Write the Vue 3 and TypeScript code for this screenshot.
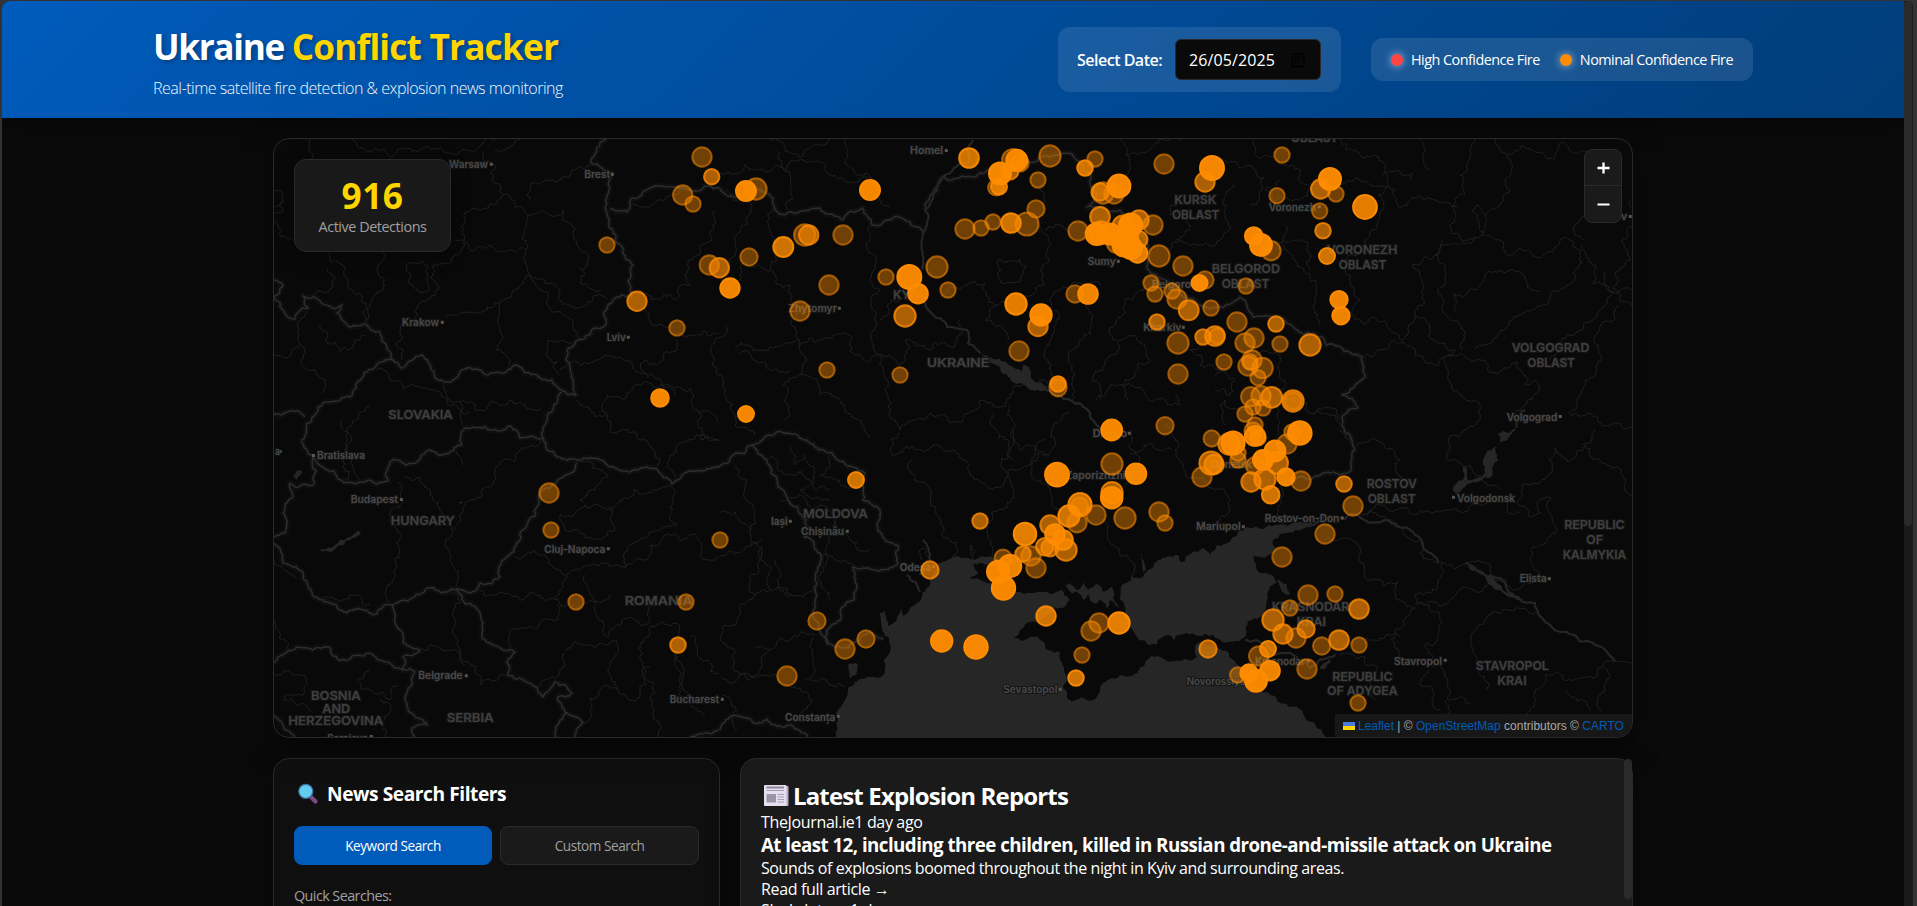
<script setup lang="ts">
type Fire = [x: number, y: number, r: number, count: number]
type Label = { t: string; x: number; y: number; w: number; region?: boolean; dot?: [number, number] }

const firesRaw: Fire[] = [
  [702,157,10.7,1],[711.7,176.7,8.7,2],[682.7,195,10.7,1],[693,204,8.7,1],[607,245,8.7,1],[637,301.3,10.7,2],[677,328,8.7,1],[660,398,9.8,6],[709.3,265,10.7,1],[719.3,267.7,10.7,2],
  [756,189,11.7,1],[746,191,11,6],[870,190,11,6],[804.7,235,11.7,1],[808.7,235,10.7,2],[783.3,247,11,3],[843,235,10.7,1],[749,257,9.7,1],[730,288,10.7,5],[829,285,10.7,1],[800,311,10.7,1],
  [886,277,8.7,1],[909.3,277,13,6],[918,293.7,10.8,5],[905,316,11.7,2],[937,267,11.7,1],[948,290,8.7,1],[827,370,8.7,1],[900,375,8.7,1],[746,414,9,6],[969,158,10.8,3],
  [1013,160,12,1],[1020,163,9.7,1],[1016.7,160.3,11.5,5],[1010,171,9.5,2],[1000,173.5,12,6],[996,187.5,9,1],[999,186.7,9,3],[1050,156,11.7,1],[1038,180,8.7,1],[1095,159,8.7,1],[1085,168,8.8,3],[1164,164,10.7,1],
  [1103,193,11.7,1],[1100,192,9.7,2],[1114,194,10.7,1],[1119,186,12.4,6],[1036,209,9.7,1],[1027,224,12.6,1],[1011,223,10.8,3],[993,222,8.7,1],[981,228,8.7,1],[965,229,10.7,1],[1078,231,10.7,1],
  [1100,216.7,10.8,2],[1100.7,232.7,12.5,2],[1096.7,234,12,6],[1110,234,11.5,5],[1123,226,11.5,2],[1130.7,225,12.5,6],[1139,220,10.7,2],[1153,225,10.7,1],[1116.7,243,11,1],[1120,240,9.5,5],[1128,237,11,5],[1139,239.5,9.5,2],[1124,245,12.5,5],[1137.5,253,10.7,4],[1131,248,12,5],[1159,256,11.7,1],
  [1151,283,8.7,1],[1155,294,8.7,1],[1075,294,9.7,1],[1088,294,10.8,5],[1016,304,11.7,4],[1038,326.5,10.7,2],[1041,315,11.7,6],[1019,351,10.7,1],[1058,387.7,9.7,1],[1058,384,8.8,3],[1157,322,8.7,2],[1111.7,430,11.4,6],
  [1205,182,10.7,2],[1212,168,13,6],[1282,155,8.7,1],[1277,195.7,8.7,1],[1320.7,189,10.7,2],[1336,194,8.7,1],[1330,179,12,6],[1365,207,12.9,4],[1319.7,211,8.7,1],[1323,230.7,8.8,2],[1327,256,9,3],
  [1271,250.7,10.7,1],[1253.7,236,9.8,6],[1261,245,12,6],[1339,299.7,9.7,5],[1341,315.7,9.7,5],[1183,266,10.7,1],[1205,280,9.7,1],[1199.5,283,9,6],[1246,286,8.7,1],[1172,291,8.7,1],[1177,299,10.7,1],[1188.7,310.3,11,2],[1211,308,8.7,1],
  [1237,322,10.7,1],[1276,324,8.8,2],[1178,343,11.7,1],[1203,337,8.7,2],[1215,336,10.8,2],[1217,336,8.7,1],[1245,343,10.7,1],[1254,338,10.7,1],[1280,344,8.7,1],[1310,345,11.7,2],[1224,362,8.7,1],[1178,374,10.7,1],
  [1248,366,10.7,1],[1252,360,10.7,1],[1250,362,8.7,1],[1262.5,368,11.3,1],[1258,377.7,8.7,1],[1250.7,396.7,10.7,1],[1261,395.7,10.7,1],[1271.7,397.3,11.4,2],[1293,401,11.7,2],[1293,401,9.5,1],[1253,407,8.7,1],[1263,408,8.7,1],[1245,414,8.7,1],
  [1255,425,8.7,1],[1253,431,9.7,1],[1255,436,11,3],[1165,425.7,9.7,1],[1211.7,438.5,9.2,1],[1229,444,11.7,2],[1233,443,12.6,5],[1292,432,8.7,1],[1253,437,9,1],[1258,437.5,8.8,2],[1238,453,8.7,1],[1238,460,8.7,1],[1287,444,10.7,1],[1299.8,433,12.8,6],
  [1202,477,10.7,1],[1211,463,12.6,2],[1214,464.5,10.7,2],[1255,466,10,1],[1277,463,12,2],[1263,460,11,6],[1275,451,11.4,5],[1251,482,10.7,2],[1265,479,11.7,2],[1286,477,9.7,5],[1301,481,10.7,1],[1270.7,494.7,9.8,3],
  [1057,474.7,12.9,6],[1112,464,11.7,1],[1136,473.7,11.3,6],[1112,492.7,11.7,2],[1111.7,497.7,11.8,5],[1080,504.7,12.6,3],[1079.5,506,9.5,1],[1069,516,11.7,3],[1077,522.7,10.7,1],[1096,515,10.7,1],[1125,518,11.7,1],[1159,512,10.7,1],[1165,523,8.7,1],
  [1050,525,10.7,2],[1025,534,12.3,4],[1055,534,10.8,4],[1063,540,10.8,3],[1066,550,11.7,2],[1044.7,546.7,9.7,2],[1050,547.7,9.7,2],[1031,556,10.7,1],[1023,554,8.7,2],[1036,568,10.7,1],[1003,558,9.5,1],[1010,566,12.3,5],[998,571.7,12,6],[1003.5,588,12.7,6],
  [1046,616,10.7,3],[1099,623,10.7,1],[1091,631,10.7,1],[1119,623,11.7,4],[1082,655,8.7,1],[1076,678,8.8,3],[1208,649,9.7,2],[1282,557,10.7,1],[1325,534,10.7,1],[1308,595,10.7,1],[1290,608,8.7,1],[1273,620,11.7,2],[1283,634,10.7,2],[1296,638,10.7,1],[1306,629,9.7,2],[1321.7,646,9.7,1],
  [1258.7,656,10.7,1],[1268,649,9,3],[1237.7,675,8.7,1],[1249,673,9.7,6],[1256,680.7,12,6],[1270,670.7,10.8,5],[1307,669,10.7,1],[1344,484,8.8,2],[1353,506,10.7,1],[1335,594,8.7,1],[1359,609,10.8,2],[1339,640,10.8,2],[1359,645,8.7,1],[1358,703,8.7,1],
  [856,480,9,3],[980,521,8.7,2],[930,570,9.7,2],[817,621,9.7,1],[845,649,10.7,1],[866,639,9.7,1],[787,676,10.7,1],[720,540,8.7,1],[941.7,641,11.7,6],[976,647,12.8,6],[549,493,10.7,1],[551,530,8.7,1],[576,602,8.7,1],[686,602,8.7,1],[678,645,8.8,2],
]

const fires = firesRaw.map(([x, y, r, n]) => ({
  x, y, r: r - 1,
  fill: +(1 - Math.pow(0.58, n)).toFixed(3),
  stroke: +(1 - Math.pow(0.45, n)).toFixed(3),
}))

const labels: Label[] = [
  { t: 'Warsaw', x: 449, y: 167.7, w: 39, dot: [491.3, 164.3] },
  { t: 'Brest', x: 584.3, y: 178.3, w: 25.7, dot: [612.3, 174.3] },
  { t: 'Krakow', x: 402, y: 325.7, w: 37, dot: [442.3, 322.3] },
  { t: 'Lviv', x: 606.7, y: 341.3, w: 19, dot: [628.3, 337.3] },
  { t: 'SLOVAKIA', x: 388.3, y: 419, w: 64.4, region: true },
  { t: 'Homel', x: 910, y: 154, w: 33, dot: [946.3, 150.5] },
  { t: 'KYIV', x: 893, y: 299, w: 29, region: true },
  { t: 'Zhytomyr', x: 788.3, y: 312, w: 48.5, dot: [839.3, 308.3] },
  { t: 'UKRAINE', x: 926.7, y: 367.3, w: 62.6, region: true },
  { t: 'Sumy', x: 1087.7, y: 265.3, w: 28, dot: [1118.3, 261.3] },
  { t: 'Belgorod', x: 1151.7, y: 288, w: 46 },
  { t: 'Kharkiv', x: 1143.3, y: 330.7, w: 38, dot: [1183.3, 327.3] },
  { t: 'Voronezh', x: 1268.7, y: 210.7, w: 47.3, dot: [1319.3, 206.7] },
  { t: 'OBLAST', x: 1291, y: 142, w: 47, region: true },
  { t: 'KURSK', x: 1174.3, y: 204, w: 42, region: true },
  { t: 'OBLAST', x: 1172, y: 218.7, w: 47.3, region: true },
  { t: 'BELGOROD', x: 1211.7, y: 273.3, w: 68.3, region: true },
  { t: 'OBLAST', x: 1221.7, y: 288, w: 47.6, region: true },
  { t: 'Dnipro', x: 1092.7, y: 437, w: 34.5, dot: [1129.3, 433.3] },
  { t: 'VORONEZH', x: 1326.7, y: 254, w: 70.6, region: true },
  { t: 'OBLAST', x: 1338.7, y: 268.7, w: 47.6, region: true },
  { t: 'VOLGOGRAD', x: 1511.7, y: 352, w: 77.6, region: true },
  { t: 'OBLAST', x: 1527.3, y: 366.7, w: 47.6, region: true },
  { t: 'Volgograd', x: 1506.7, y: 420.7, w: 50.6, dot: [1560.3, 416.5] },
  { t: 'v', x: 1621, y: 220, w: 6, dot: [1630.3, 216.5] },
  { t: 'a', x: 275, y: 455, w: 5, dot: [280.3, 451.5] },
  { t: 'Bratislava', x: 317, y: 458.7, w: 48, dot: [313.5, 455.5] },
  { t: 'Budapest', x: 350.7, y: 503.3, w: 47.3, dot: [401.3, 499.5] },
  { t: 'HUNGARY', x: 390.7, y: 525.3, w: 64, region: true },
  { t: 'Cluj-Napoca', x: 544.3, y: 552.7, w: 61, dot: [608.3, 548.7] },
  { t: 'ROMANIA', x: 624.7, y: 604.7, w: 68, region: true },
  { t: 'Belgrade', x: 418.3, y: 679.3, w: 44.4, dot: [466.3, 675.7] },
  { t: 'Bucharest', x: 669.7, y: 703.3, w: 49.3, dot: [722.3, 699.3] },
  { t: 'BOSNIA', x: 311, y: 700, w: 49.6, region: true },
  { t: 'AND', x: 322.3, y: 712.5, w: 27.7, region: true },
  { t: 'HERZEGOVINA', x: 288.3, y: 725.3, w: 95, region: true },
  { t: 'SERBIA', x: 446.7, y: 722.3, w: 47, region: true },
  { t: 'Sarajevo', x: 327.3, y: 742, w: 41, dot: [371.3, 736.5] },
  { t: 'MOLDOVA', x: 803, y: 517.7, w: 64.7, region: true },
  { t: 'Iași', x: 771, y: 525.3, w: 16.7, dot: [790.3, 521.3] },
  { t: 'Chișinău', x: 801, y: 534.7, w: 43, dot: [847.3, 531.3] },
  { t: 'Odesa', x: 899.7, y: 570.7, w: 31.5, dot: [933.7, 566.7] },
  { t: 'Constanța', x: 785, y: 720.7, w: 50.3, dot: [838.3, 716.3] },
  { t: 'Sevastopol', x: 1003.3, y: 692.7, w: 54, dot: [1060.3, 689.3] },
  { t: 'Zaporizhzhia', x: 1065.5, y: 479, w: 66 },
  { t: 'Mariupol', x: 1196, y: 530, w: 44.7, dot: [1243.3, 526.7] },
  { t: 'Donetsk', x: 1211, y: 467.5, w: 41 },
  { t: 'Rostov-on-Don', x: 1264.7, y: 521.5, w: 74.6, dot: [1342.3, 518] },
  { t: 'Krasnodar', x: 1255, y: 665, w: 50, dot: [1308.3, 661] },
  { t: 'KRASNODAR', x: 1271.7, y: 611, w: 77.6, region: true },
  { t: 'KRAI', x: 1296.7, y: 625.7, w: 29.3, region: true },
  { t: 'Novorossiysk', x: 1186.7, y: 685.3, w: 64 },
  { t: 'ROSTOV', x: 1366.7, y: 488.3, w: 50, region: true },
  { t: 'OBLAST', x: 1367.7, y: 503, w: 48, region: true },
  { t: 'Volgodonsk', x: 1457, y: 501.7, w: 58, dot: [1453.5, 497.3] },
  { t: 'REPUBLIC', x: 1564.3, y: 529, w: 60.4, region: true },
  { t: 'OF', x: 1586, y: 543.7, w: 17, region: true },
  { t: 'KALMYKIA', x: 1562.7, y: 558.5, w: 63.6, region: true },
  { t: 'Elista', x: 1519.7, y: 582, w: 27, dot: [1549.3, 578.7] },
  { t: 'STAVROPOL', x: 1475.7, y: 670, w: 73, region: true },
  { t: 'KRAI', x: 1497.3, y: 684.7, w: 29.3, region: true },
  { t: 'Stavropol', x: 1394, y: 664.7, w: 48, dot: [1445.3, 660.3] },
  { t: 'REPUBLIC', x: 1332.3, y: 680.7, w: 60.2, region: true },
  { t: 'OF ADYGEA', x: 1327, y: 695.3, w: 70.7, region: true },
]

/* Turns a coarse polyline into a wandering one by repeated midpoint displacement. */
function rough(src: string, amp: number): string {
  let pts = src.split(' ').map((p) => p.split(',').map(Number) as [number, number])
  let seed = Math.round(pts[0][0] * 31 + pts[0][1] * 17 + pts.length * 101)
  const rnd = () => {
    seed = (seed * 1103515245 + 12345) % 2147483648
    return seed / 2147483648 - 0.5
  }
  for (let level = 0; level < 5; level++) {
    const out: [number, number][] = [pts[0]]
    for (let i = 1; i < pts.length; i++) {
      const [ax, ay] = pts[i - 1]
      const [bx, by] = pts[i]
      const dx = bx - ax
      const dy = by - ay
      if (Math.hypot(dx, dy) > 3.2) {
        const k = rnd() * amp
        out.push([(ax + bx) / 2 - dy * k, (ay + by) / 2 + dx * k])
      }
      out.push([bx, by])
    }
    pts = out
  }
  return 'M' + pts.map((p) => p[0].toFixed(1) + ' ' + p[1].toFixed(1)).join('L')
}

const borders = [
  '607,139 591,163 612,173 607,203 613,233 633,265 631,297 613,300 578,340 566,360 576,395 562,390 538,377 513,366 488,375 467,368 447,382 435,378 422,355 403,368 393,360 380,332 350,327 337,313 342,305 303,296 308,308 295,319 274,297',
  '393,360 378,363 362,378 350,397 318,407 307,423 302,440 313,457 313,485 295,487 290,483 293,497 283,513 285,533 274,537',
  '274,415 287,412 305,417', '274,280 283,285 280,292 274,297',
  '313,457 320,465 343,482 388,481 390,462 420,459 430,450 443,455 462,445 467,428 490,430 510,426 520,438 543,438 543,428 553,410 562,392',
  '543,438 557,457 577,460 590,458 610,467 637,470 657,469 672,484 687,472 719,467 733,455 752,445 767,460 778,487 802,515 820,553 817,583 815,620 827,640 843,648 863,635 883,640',
  '752,445 766,436 787,433 807,440 833,455 853,467 865,473 863,500 880,510 883,537 898,545 898,563 863,568 853,567 857,587 843,607 830,627 828,645',
  '577,463 557,482 540,493 537,507 520,540 503,560 500,577 480,583 477,590 427,588 413,598 392,605 377,614 347,613 323,600 303,578 283,563 274,543',
  '457,590 480,613 482,633 515,652 508,675 537,687 543,697 555,682 572,693 558,697 567,713 555,737', '567,713 583,722 575,737',
  '392,605 397,627 403,643 420,651 403,657 403,670 387,662 360,655 347,660 307,648 287,652 274,663', '403,670 415,672 405,697 427,725 412,728 415,737', '274,715 295,737',
  '610,208 627,212 643,192 680,188 719,188 747,193 773,198 775,210 797,213 820,208 843,220 863,208 872,225 893,218 910,222 923,233',
  '925,210 933,193 943,177 980,173 1000,170 1020,162 1050,157 1073,155 1090,173 1097,193 1087,207 1120,210 1147,243 1147,267 1150,273 1173,283 1203,307 1240,297 1253,317 1297,330 1327,345 1340,347 1362,357 1365,377 1342,395 1358,407 1342,425 1352,440 1355,450 1347,473 1320,475 1285,482',
  '720,730 767,719 790,725 808,737', '719,730 700,734 690,737',
].map((s) => rough(s, 0.42))

const regions = [
  '310,139 306,175', '274,190 283,195 280,205 274,207', '283,200 280,237 293,240', '352,139 370,152 390,157 420,150 445,153 470,150 480,146 495,139', '482,152 495,165 503,195 480,210 465,212 464,240 455,255 433,265 438,290 420,303 415,320',
  '520,139 503,150 495,151', '530,200 531,183 545,180 570,176 590,166', '503,195 515,208 528,215 527,245 530,275 519,288 500,303 468,313 445,317', '455,240 470,250 490,245 505,252 527,250', '528,215 563,210 575,228 590,257 580,283 601,290',
  '530,275 545,283 560,293 563,305 587,302 607,299', '530,275 548,293 565,315 578,340', '548,340 547,353 558,375', '499,303 500,330 510,366', '578,340 560,341 548,340', '384,250 378,272 383,290 370,305 365,325', '406,268 415,263 428,266 430,288 420,292 406,268',
  '328,252 342,265 352,290 365,323', '312,297 330,290 328,268', '415,320 400,332 402,360', '320,325 325,340 340,352 353,345 365,336', '308,308 297,325 300,345 302,365 315,370 322,393', '274,355 290,356 300,348',
  '376,370 390,380 420,388 445,398 460,402 490,402 510,400 540,408', '445,382 447,400 470,413', '620,295 640,290 652,300 675,300 690,285 688,263 700,250 712,240 715,210', '645,310 650,323 670,333 690,335 719,333', '560,370 590,363 605,355 630,360 643,373 660,380 676,395',
  '676,340 675,352 660,362 645,360 648,378', '576,400 590,410 605,415', '608,415 607,395 640,385 665,385 700,412 719,423', '607,415 610,430 640,440 655,455 657,469', '700,412 701,440 719,440', '672,484 670,455 690,440 719,440', '615,215 635,205 665,200 680,193',
  '460,402 460,415 467,428', '342,420 352,440 343,482', '370,405 352,425 360,482', '463,440 455,450 463,465', '398,482 390,510 397,530 395,560 393,580 390,603', '405,476 430,490 440,508 452,530 450,550 455,587', '543,438 520,450 500,462 492,485 475,500 462,513 455,530', '323,600 345,600 370,605',
  '577,463 590,462 600,470 608,477 595,490 580,500 583,503', '560,515 585,505 610,507 615,530 600,540 585,538 565,530 560,515', '515,557 540,556 560,570 567,575', '480,590 500,592 520,600 540,595 558,600', '567,575 560,590 555,598 560,605 595,602 610,595',
  '567,573 580,570 600,565 625,568', '585,575 590,595 600,620 608,637', '608,637 610,630 640,625 650,618 656,600', '610,510 620,500 650,493 675,490 677,525 660,530 640,540 625,568', '625,568 645,560 650,545 670,535 690,535 700,555 719,557', '558,605 558,620 537,628 515,628 512,648',
  '565,650 590,645 617,641 618,690', '565,653 560,670 545,680 540,687', '618,690 600,690 590,710 578,725', '618,690 640,697 642,672 650,667', '650,628 646,670 650,700 660,725 658,737', '650,626 680,626 678,650 683,690 690,700', '690,635 697,655 710,672 719,673',
  '450,590 455,620 460,650 465,665', '415,650 440,648 460,655 480,685 508,676', '274,560 295,578', '274,620 285,640 287,652', '274,673 300,675 303,695 285,696 283,700 310,712', '370,670 357,680 362,690 390,700 398,685', '380,700 390,712 385,737',
  '677,650 680,700 705,715', '719,512 735,512 750,530 762,548 760,560 755,595', '720,556 740,553 762,540', '762,548 770,590 790,595 815,591', '735,465 747,500 750,530', '722,628 740,605 755,595 770,590', '775,560 780,590 790,597', '722,628 735,650 735,672 750,680', '755,648 770,650 780,638 800,633 815,636', '770,650 760,670 750,678',
  '722,678 755,678 780,683 800,688 812,700 800,715', '810,680 830,685 845,686', '813,637 805,680', '722,695 737,710 737,730', '770,455 778,470 790,475 810,480 830,490', '790,445 795,465 805,455 815,468 800,490 830,500', '830,455 820,475 840,480 860,485', '780,500 800,495 820,505 835,525 850,540 870,550', '820,555 845,560 855,567', '835,520 825,550 830,600',
  '766,139 785,152 810,148 830,139', '845,139 847,165 860,175 875,190 890,207', '780,152 790,172 787,210', '720,173 770,172 830,175 865,173 880,185', '720,190 745,200 747,225 735,245 725,270 720,290', '777,205 775,250 770,270 790,285 797,310', '770,272 745,262 740,280 720,295',
  '872,225 868,250 875,265 880,290 875,330 880,355 885,390 895,420', '797,310 800,350 803,375 783,385 785,420', '800,345 820,340 850,335 855,355 875,355', '735,347 760,350 790,343 800,340', '740,353 770,370 790,370', '725,325 727,400 735,425 755,435', '875,355 900,365 905,340 930,350 955,345 960,320', '903,283 900,300 880,320',
  '940,296 960,290 985,283 995,305 985,320 1000,325 1008,340', '1045,180 1040,215 1047,250 1045,285 1020,295 995,305', '998,260 1020,259 1023,275 1010,283 1000,280 998,260', '1045,230 1060,225 1070,235', '1100,285 1080,283 1060,290 1050,300 1055,325 1045,350 1050,370 1058,385', '1085,300 1080,340 1075,375 1072,400',
  '1148,285 1125,300 1117,320 1118,350 1105,365 1100,400', '1118,340 1145,345 1150,360 1135,375 1125,390 1128,400', '1095,400 1110,385 1140,387 1165,400 1180,405 1175,395', '803,375 820,395 845,405 860,420 870,437', '895,420 900,430 930,413 970,413 980,400 1010,398 1050,388', '900,433 890,450 895,455 920,450 950,452', '993,413 1008,440 1013,460', '1010,405 1015,440 1010,480 1003,510 990,545 990,558',
  '912,460 915,480 930,490 940,520 950,540 953,558', '950,452 965,460 975,480 1005,480 1030,465 1050,455', '1013,430 1020,450 1045,455 1055,440 1070,413', '1045,440 1040,480 1050,490 1060,510', '1130,430 1137,455 1125,485', '1105,520 1112,545 1130,560 1130,580', '1165,425 1175,450 1185,475 1215,490 1230,500 1215,525', '1130,455 1160,450 1172,450', '1285,480 1280,500 1277,515 1285,530',
  '970,556 970,545 973,560', '921,560 925,548 932,562', '1200,345 1190,350 1200,365 1225,370', '1215,375 1235,380 1230,395 1215,390', '1240,350 1275,352 1280,390 1310,413 1340,420', '1225,425 1225,400 1250,405', '1275,400 1278,430 1280,450', '1312,413 1335,415 1342,425',
  '1120,139 1130,160 1125,180', '1125,155 1150,150 1180,140 1200,139', '1200,165 1225,160 1255,170 1262,190 1250,205', '1280,180 1265,190 1290,200 1320,183', '1255,139 1260,158 1283,165 1300,170 1307,185', '1235,185 1225,210 1220,240 1200,245 1180,240 1170,250', '1285,225 1295,260 1310,280 1315,300 1320,325', '1265,260 1300,240 1310,270', '1180,200 1170,215 1190,230 1175,240',
  '1340,139 1360,155 1385,165 1388,178 1378,195 1377,225 1365,240 1345,270 1350,285 1360,300 1355,320 1375,318 1390,330 1403,340', '1325,187 1345,183 1380,186 1395,190 1397,203 1415,198 1435,200 1458,207', '1383,175 1395,171 1412,173 1410,180', '1420,139 1423,155 1430,170', '1475,139 1472,155 1460,175 1465,195 1455,212 1450,225 1460,238 1475,237 1485,215 1478,205',
  '1495,139 1500,150 1508,155 1505,180 1510,190 1500,205 1485,215', '1508,153 1535,152 1555,157 1560,143 1580,152 1600,160', '1478,205 1472,210 1485,235 1495,240 1508,255 1520,248 1555,247 1570,240 1580,250 1575,275 1560,290 1545,305 1520,315 1500,330 1485,345 1475,350',
  '1475,237 1472,243 1445,245 1437,255 1435,255 1442,240', '1437,255 1412,265 1423,290 1415,313 1430,330 1455,350 1452,385 1475,400 1480,415 1465,430 1450,436', '1437,255 1445,280 1443,305 1460,325 1462,350', '1454,312 1453,293 1475,290 1485,275 1510,270 1527,282 1540,291', '1352,440 1340,430 1370,440 1385,448 1400,460 1402,480', '1362,357 1380,350 1400,343 1415,355 1460,354 1480,360 1497,375 1518,362 1525,385 1535,380 1532,400 1515,410',
  '1403,340 1415,315', '1582,245 1595,265 1593,284 1605,285 1633,290', '1604,272 1600,310 1580,330 1560,345 1550,360', '1630,200 1622,240 1630,260 1615,275 1620,300 1633,305', '1618,305 1600,330 1598,345 1585,380 1580,395 1568,413', '1570,415 1590,413 1610,425 1633,425', '1585,215 1575,225 1575,235 1583,240',
  '1450,436 1448,460 1470,465 1480,475 1500,490', '1366,515 1380,505 1395,510 1430,512 1480,505 1520,513', '1353,515 1385,517 1400,527 1420,540 1430,560 1445,563 1465,564', '1320,545 1360,548 1360,562 1370,580 1398,582 1400,600 1415,608 1405,625 1395,630 1395,648 1405,665', '1442,563 1438,580 1415,595 1425,605 1450,600 1460,590 1480,592 1488,585',
  '1470,562 1490,570 1510,587 1520,588 1540,573 1530,560 1545,543 1552,520 1550,497 1540,500 1540,513 1528,515 1522,485 1550,473 1555,448 1568,462 1585,445 1600,460 1617,467 1625,485 1633,497', '1595,430 1582,445', '1415,604 1440,615 1440,628 1425,645 1430,665 1445,675 1448,700 1470,705', '1487,690 1478,665 1482,625 1492,612 1515,609 1540,618',
  '1632,665 1600,668 1580,678 1560,674 1545,675 1535,690 1530,710 1510,720', '1605,668 1610,678 1600,695 1602,710', '1365,640 1390,635 1400,637', '1340,655 1365,657 1378,668 1375,700', '1445,700 1450,713 1435,715', '1565,690 1590,710', '1430,672 1420,685 1440,710',
].map((s) => rough(s, 0.6))

const rivers = [
  '973,140 968,163 943,177 933,197 925,210 926,227 922,250 923,270', '923,295 928,310 947,327 967,330 968,343 980,353', '1045,388 1070,400 1090,413 1105,430', '923,540 930,560 920,575', '1465,563 1475,568 1500,578 1515,597 1535,603 1545,622 1567,632 1595,645 1615,662', '1395,524 1415,535 1425,550 1438,562', '1300,525 1335,518 1355,514 1395,524',
  '1515,430 1505,441', '1516,428 1525,410', '1245,640 1275,655 1310,668 1335,655', '907,575 920,592',
].map((s) => rough(s, 0.35))

const water = [
  '836,738 838,720 838,710 848,688 855,682 867,677 883,675 884,660 889,638 883,632 885,615 888,626 897,620 900,607 903,616 910,608 922,593 930,582 937,565 950,559 967,558 975,560 990,556 1002,560 1000,566 980,563 973,564 978,572 970,578 985,582 995,588 1003,593 1020,592 1040,592 1050,594 1062,590 1070,600 1060,608 1053,608 1045,616 1037,622 1020,630 1014,638 1022,641 1038,637 1048,650 1054,653 1060,652 1064,667 1063,687 1067,695 1072,702 1078,699 1090,701 1100,690 1103,683 1112,678 1122,675 1132,676 1140,667 1147,660 1157,656 1167,661 1180,661 1197,657 1195,646 1200,642 1218,648 1233,660 1249,672 1257,687 1267,692 1278,702 1290,707 1303,712 1313,722 1328,738',
  '1121,587 1132,580 1131,576 1143,577 1153,568 1167,557 1178,555 1183,562 1192,552 1203,548 1210,555 1217,545 1233,537 1247,527 1262,529 1277,525 1300,522 1322,521 1308,527 1300,530 1285,533 1273,540 1276,550 1267,556 1253,555 1256,566 1260,573 1272,575 1277,582 1267,600 1260,617 1247,621 1246,635 1240,641 1233,642 1220,640 1213,635 1198,636 1187,633 1178,635 1174,640 1168,635 1163,637 1157,644 1150,645 1133,630 1125,617 1120,600',
  '980,353 992,358 1007,363 1022,372 1023,365 1030,370 1033,380 1048,387 1040,391 1030,390 1018,384 1010,378 1000,367 987,360',
  '1065,585 1070,583 1078,590 1085,582 1088,590 1096,584 1103,592 1112,587 1114,600 1119,608 1110,600 1107,608 1099,596 1096,604 1088,594 1084,600 1077,592 1072,594',
  '1516,427 1508,433 1498,433 1500,442 1488,450 1485,473 1477,478 1467,480 1464,466 1462,480 1453,491 1456,495 1477,482 1491,477 1498,461 1495,449 1507,440',
  '320,549 333,547 350,537 358,530 361,534 350,540 335,549 322,552',
  '1467,565 1472,571 1485,575 1488,584 1500,590 1510,597 1525,599 1510,593 1493,578 1477,570',
  '1141,553 1146,568 1143,572', '848,665 858,664 856,675 850,679', '1277,579 1290,594 1282,592',
  '293,476 300,470 302,473 297,480', '880,613 885,611 885,630 882,630',
  '1320,667 1333,656 1337,652 1330,663 1320,669', '457,502 462,501 462,504',
].map((s) => rough(s, 0.4) + 'Z')
</script>

<template>
  <div class="window">
    <div class="page">
      <header class="header">
        <div class="header-inner">
          <div class="brand">
            <h1>Ukraine <span>Conflict Tracker</span></h1>
            <p>Real-time satellite fire detection &amp; explosion news monitoring</p>
          </div>
          <div class="controls">
            <div class="date-box">
              <span class="date-label">Select Date:</span>
              <div class="date-input">
                <span>26/05/2025</span>
                <svg width="16" height="16" viewBox="0 0 16 16"><path d="M2 3.5a1.5 1.5 0 0 1 1.5-1.5h9A1.5 1.5 0 0 1 14 3.500V13.500a1 1 0 0 1-1 1H3a1 1 0 0 1-1-1zM2 5.500H14M4.500 8h1.500M7.300 8h1.500M10 8h1.500M4.500 11h1.500M7.300 11h1.500" fill="none" stroke="#000" stroke-width="1.300" /></svg>
              </div>
            </div>
            <div class="legend">
              <span class="legend-item"><i class="dot high"></i>High Confidence Fire</span>
              <span class="legend-item"><i class="dot nominal"></i>Nominal Confidence Fire</span>
            </div>
          </div>
        </div>
      </header>

      <main class="main">
        <section class="map">
          <svg class="map-canvas" viewBox="274 139 1358 598" width="1358" height="598">
            <path v-for="(d, i) in regions" :key="'r' + i" :d="d" class="region-line" />
            <path v-for="(d, i) in borders" :key="'g' + i" :d="d" class="border-glow" />
            <path v-for="(d, i) in borders" :key="'b' + i" :d="d" class="border-line" />
            <path v-for="(d, i) in water" :key="'w' + i" :d="d" class="water" />
            <path v-for="(d, i) in rivers" :key="'v' + i" :d="d" class="river" />
            <g v-for="(l, i) in labels" :key="'l' + i">
              <rect v-if="l.dot" :x="l.dot[0] - 1.5" :y="l.dot[1] - 1.5" width="3" height="3" class="town" />
              <text :x="l.x" :y="l.y" :textLength="l.w" lengthAdjust="spacingAndGlyphs" :class="l.region ? 'region' : 'city'">{{ l.t }}</text>
            </g>
            <circle v-for="(f, i) in fires" :key="'f' + i" class="fire" :cx="f.x" :cy="f.y" :r="f.r" :fill-opacity="f.fill" :stroke-opacity="f.stroke" />
          </svg>
          <div class="stat">
            <strong>916</strong>
            <span>Active Detections</span>
          </div>
          <div class="zoom">
            <button><svg width="13" height="12" viewBox="0 0 13 12"><path d="M6.500 .5v11M.5 6h12" stroke="#fff" stroke-width="2.300" /></svg></button>
            <button><svg width="13" height="12" viewBox="0 0 13 12"><path d="M.5 6.500h12" stroke="#fff" stroke-width="2.200" /></svg></button>
          </div>
          <div class="attribution">
            <svg width="12" height="8" viewBox="0 0 12 8"><path fill="#4C7BE1" d="M0 0h12v4H0z" /><path fill="#FFD500" d="M0 4h12v4H0z" /></svg>
            <a>Leaflet</a> | © <a>OpenStreetMap</a> contributors © <a>CARTO</a>
          </div>
        </section>

        <div class="panels">
          <section class="panel filters">
            <h2>
              <svg width="22" height="22" viewBox="0 0 22 22">
                <path d="M13.500 13.500l5 5" stroke="#7b4a85" stroke-width="4.200" stroke-linecap="round" />
                <circle cx="8.800" cy="8.300" r="7" fill="#62cdf0" stroke="#3c6f9e" stroke-width="1.300" />
              </svg>
              <span>News Search Filters</span>
            </h2>
            <div class="tabs">
              <button class="tab active">Keyword Search</button>
              <button class="tab">Custom Search</button>
            </div>
            <p class="quick">Quick Searches:</p>
          </section>
          <section class="panel news">
            <h2>
              <svg width="26" height="24" viewBox="0 0 26 24">
                <rect x="21" y="2" width="4.500" height="20" rx="1" fill="#b9acc6" />
                <rect x="1" y="1" width="22.500" height="21" rx="1" fill="#e6dff0" />
                <path d="M3.500 3.500h17.500" stroke="#8f8799" stroke-width="2" />
                <path d="M3.500 6.500h17.500M14.500 10.500h6.500M14.500 13h6.500M14.500 15.500h6.500M14.500 18h6.500" stroke="#a79fb2" stroke-width="1" />
                <rect x="3.500" y="10" width="9.500" height="8.500" rx="1" fill="#9b93a6" />
              </svg>
              <span>Latest Explosion Reports</span>
            </h2>
            <div class="line meta">TheJournal.ie1 day ago</div>
            <h3>At least 12, including three children, killed in Russian drone-and-missile attack on Ukraine</h3>
            <div class="line summary">Sounds of explosions boomed throughout the night in Kyiv and surrounding areas.</div>
            <div class="line more">Read full article →</div>
            <div class="line next">Slashdot.org1 day ago</div>
            <i class="panel-thumb"></i>
          </section>
        </div>
      </main>
    </div>
    <div class="scrollbar"><i></i></div>
  </div>
</template>

<style>
html, body { background: #333; overflow: hidden; }
</style>

<style scoped>
.window {
  width: 1917px; height: 906px; box-sizing: border-box; padding: 1px 4px 0 2px;
  background: #333; display: flex; overflow: hidden;
  font-family: "Open Sans", "Noto Sans", sans-serif; color: #fff;
}
.page { width: 1902px; height: 905px; background: #0a0a0a; overflow: hidden; border-top-left-radius: 8px; }
.scrollbar { width: 9px; height: 905px; background: #1a1a1a; border-top-right-radius: 6px; }
.scrollbar i { display: block; width: 8px; height: 525px; border-radius: 4px; background: #2a2a2a; }
h1, h2, h3, p { margin: 0; }
button { font: inherit; color: inherit; margin: 0; padding: 0; }

.header { height: 117px; background: linear-gradient(135deg, #005bbb 0%, #003d7a 100%); box-shadow: 0 4px 20px rgba(0, 0, 0, .5); }
.header-inner { width: 1600px; height: 117px; margin: 0 auto; display: flex; justify-content: space-between; align-items: center; }
.brand { height: 77px; display: flex; flex-direction: column; }
h1 { font-size: 35.2px; line-height: 47px; font-weight: 700; letter-spacing: -1.35px; text-shadow: 2px 2px 4px rgba(0, 0, 0, .3); margin-top: 2px; white-space: nowrap; }
h1 span { color: #ffd500; letter-spacing: -.8px; }
.brand p { font-size: 16px; line-height: 22px; font-weight: 300; margin-top: 7px; letter-spacing: -.48px; white-space: nowrap; color: #f2f7fc; }
.controls { display: flex; gap: 30px; align-items: center; }
.date-box { width: 283px; height: 65px; box-sizing: border-box; padding: 0 20px 0 19px; display: flex; align-items: center; justify-content: space-between; border-radius: 12px; background: rgba(255, 255, 255, .1); }
.date-label { font-size: 16px; font-weight: 600; letter-spacing: -.5px; white-space: nowrap; }
.date-input { width: 146px; height: 41px; box-sizing: border-box; border: 1px solid #2a2a2a; border-radius: 6px; background: #0a0a0a; display: flex; align-items: center; justify-content: space-between; padding: 0 14px 0 13px; font-size: 16px; letter-spacing: .1px; }
.legend { width: 382px; height: 43px; box-sizing: border-box; padding: 0 20px; display: flex; align-items: center; justify-content: space-between; border-radius: 12px; background: rgba(255, 255, 255, .1); font-size: 14.4px; letter-spacing: -.52px; white-space: nowrap; }
.legend-item { display: flex; align-items: center; gap: 8px; }
.dot { width: 12px; height: 12px; border-radius: 50%; box-shadow: 0 0 8px rgba(255, 255, 255, .6); }
.high { background: #ff4444; }
.nominal { background: #ff8c00; }

.main { width: 1360px; margin: 20px auto 0; }
.map { position: relative; box-sizing: border-box; width: 1360px; height: 600px; border: 1px solid #2a2a2a; border-radius: 16px; overflow: hidden; background: #090909; box-shadow: 0 8px 32px rgba(0, 0, 0, .4); }
.map-canvas { display: block; }
.region-line { fill: none; stroke: #222; stroke-width: .9; }
.border-glow { fill: none; stroke: #131313; stroke-width: 6; stroke-linejoin: round; opacity: .7; }
.border-line { fill: none; stroke: #2d2d2d; stroke-width: 1.5; stroke-linejoin: round; }
.water { fill: #262626; }
.river { fill: none; stroke: #252525; stroke-width: 2.2; }
.town { fill: #555; }
.city, .region { font-family: Inter, "Open Sans", sans-serif; paint-order: stroke; stroke: #151515; stroke-width: 2px; }
.city { font-size: 10px; font-weight: 600; fill: #4a4a4a; }
.region { font-size: 12.4px; font-weight: 600; fill: #404040; }
.fire { fill: #ff8c00; stroke: #ff8c00; stroke-width: 2; }

.stat { position: absolute; left: 20px; top: 20px; width: 157px; height: 93px; box-sizing: border-box; border: 1px solid #2a2a2a; border-radius: 12px; background: rgba(26, 26, 26, .98); box-shadow: 0 4px 20px rgba(0, 0, 0, .3); display: flex; flex-direction: column; align-items: center; }
.stat strong { font-size: 35.2px; line-height: 35px; letter-spacing: .5px; color: #ffd500; margin-top: 18px; }
.stat span { font-size: 14.4px; line-height: 20px; color: #a0a0a0; margin-top: 4px; letter-spacing: -.45px; }
.zoom { position: absolute; right: 10px; top: 10px; width: 38px; height: 74px; box-sizing: border-box; border: 1px solid #2a2a2a; border-radius: 8px; background: #1a1a1a; overflow: hidden; display: flex; flex-direction: column; }
.zoom button { height: 36px; border: 0; background: none; display: flex; align-items: center; justify-content: center; }
.zoom button:first-child { border-bottom: 1px solid #2a2a2a; }
.attribution { position: absolute; right: 0; bottom: 0; width: 297px; height: 23px; box-sizing: border-box; padding-left: 8px; background: rgba(26, 26, 26, .92); color: #a8a8a8; font: 12px/24px "Liberation Sans", Arial, sans-serif; white-space: nowrap; }
.attribution svg { margin-right: 3px; }
.attribution a { color: #005bbb; }

.panels { margin-top: 20px; display: grid; grid-template-columns: 447px 893px; gap: 20px; }
.panel { height: 400px; box-sizing: border-box; border: 1px solid #2a2a2a; border-radius: 16px; box-shadow: 0 8px 32px rgba(0, 0, 0, .3); padding: 20px; }
.filters { background: #0f0f0f; }
.filters h2 { display: flex; align-items: center; height: 30px; font-size: 19.2px; line-height: 30px; font-weight: 700; padding-left: 3px; letter-spacing: -.45px; }
.filters h2 svg { margin-right: 8px; }
.tabs { display: grid; grid-template-columns: 198px 199px; gap: 8px; margin-top: 17px; }
.tab { height: 39px; box-sizing: border-box; border: 1px solid #2a2a2a; border-radius: 8px; background: #1a1a1a; color: #a0a0a0; font-size: 13.6px; letter-spacing: -.45px; }
.tab.active { background: #005bbb; border-color: #005bbb; color: #fff; }
.quick { margin-top: 21px; font-size: 14.4px; line-height: 20px; color: #a0a0a0; letter-spacing: -.58px; }
.news { position: relative; background: #1a1a1a; }
.news h2 { display: flex; align-items: center; height: 32px; font-size: 24px; line-height: 32px; font-weight: 700; padding-left: 2px; margin-top: 1px; letter-spacing: -.85px; white-space: nowrap; }
.news h2 svg { margin-right: 4px; }
.line { font-size: 16px; line-height: 21.300px; white-space: nowrap; letter-spacing: -.35px; }
.summary { line-height: 20.500px; letter-spacing: -.41px; }
h3 { font-size: 18.720px; line-height: 25px; margin: -1px 0 1px; font-weight: 700; letter-spacing: -.53px; white-space: nowrap; }
.panel-thumb { position: absolute; right: 0; top: 0; width: 8px; height: 140px; border-radius: 4px; background: #2a2a2a; }
</style>
